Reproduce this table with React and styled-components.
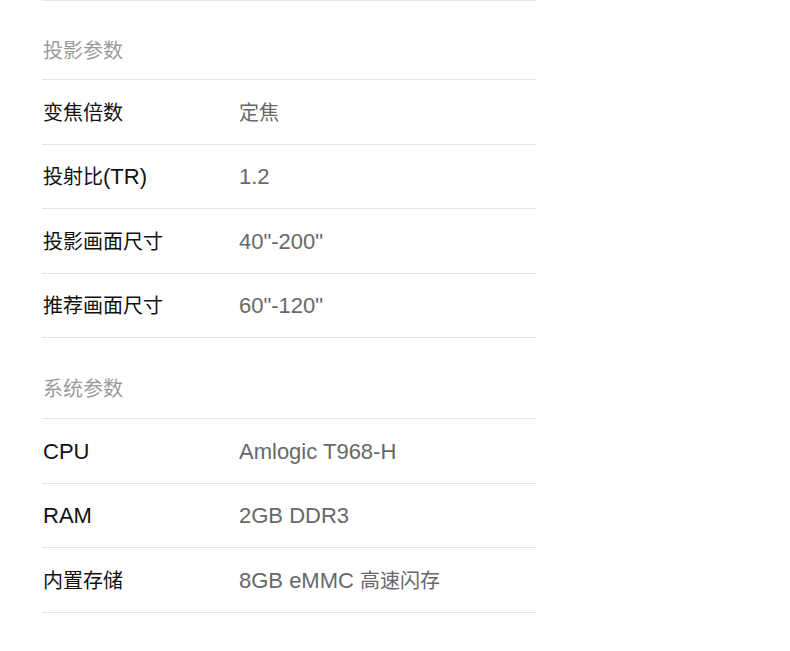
import React from 'react'
import styled, { createGlobalStyle } from 'styled-components'

const GlobalStyle = createGlobalStyle`
  html, body {
    margin: 0;
    padding: 0;
    background: #ffffff;
  }
  body {
    font-family: "Liberation Sans", "Noto Sans CJK SC", sans-serif;
  }
`

const Page = styled.div`
  width: 494px;
  margin-left: 42px;
  border-top: 1px solid #e8e8e8;
`

const Section = styled.section`
  display: flex;
  flex-direction: column;
`

const Title = styled.div`
  padding: ${(p) => (p.$first ? '40px 0 18px 1px' : '41px 0 19px 1px')};
  line-height: 20px;
  font-size: 20px;
  color: #9a9a9a;
  border-bottom: 1px solid #e3e3e3;
`

const Row = styled.div`
  display: grid;
  grid-template-columns: 197px 1fr;
  align-items: center;
  box-sizing: border-box;
  height: 64.5px;
  padding-top: 2px;
  border-bottom: 1px solid #e3e3e3;
  font-size: 22px;
  line-height: 24px;
`

const Label = styled.span`
  padding-left: 1px;
  color: #111111;
`

const Value = styled.span`
  color: #686868;
`

// CJK runs are set a little smaller than the latin text around them
const Cjk = styled.span`
  font-size: 20px;
`

const mixed = (text) =>
  text
    .split(/([\u3400-\u9fff]+)/)
    .filter(Boolean)
    .map((part, i) =>
      /[\u3400-\u9fff]/.test(part) ? <Cjk key={i}>{part}</Cjk> : part
    )

const sections = [
  {
    title: '投影参数',
    rows: [
      ['变焦倍数', '定焦'],
      ['投射比(TR)', '1.2'],
      ['投影画面尺寸', '40"-200"'],
      ['推荐画面尺寸', '60"-120"'],
    ],
  },
  {
    title: '系统参数',
    rows: [
      ['CPU', 'Amlogic T968-H'],
      ['RAM', '2GB DDR3'],
      ['内置存储', '8GB eMMC 高速闪存'],
    ],
  },
]

const App = () => {
  return (
    <>
      <GlobalStyle />
      <Page>
        {sections.map((section, i) => (
          <Section key={section.title}>
            <Title $first={i === 0}>{section.title}</Title>
            {section.rows.map(([label, value]) => (
              <Row key={label}>
                <Label>{mixed(label)}</Label>
                <Value>{mixed(value)}</Value>
              </Row>
            ))}
          </Section>
        ))}
      </Page>
    </>
  )
}

export default App
